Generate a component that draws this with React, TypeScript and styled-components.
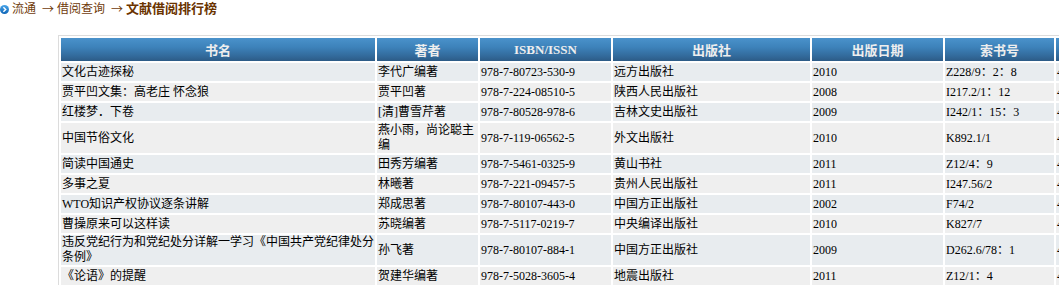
import React from "react";
import styled, { createGlobalStyle } from "styled-components";

const GlobalStyle = createGlobalStyle`
  html, body {
    margin: 0;
    padding: 0;
    background: #ffffff;
    overflow: hidden;
  }
  body {
    font-family: "Liberation Serif", "Noto Sans CJK SC", serif;
    font-size: 12px;
    color: #000;
  }
`;

const Page = styled.div`
  width: 1200px;
`;

const Crumbs = styled.div`
  display: flex;
  align-items: center;
  height: 18px;
  color: #703b0b;
  font-family: "Liberation Sans", "Noto Sans CJK SC", sans-serif;
  font-size: 12px;
  line-height: 18px;
`;

const CrumbIcon = styled.svg`
  width: 9px;
  height: 9px;
  margin: 0 3px 0 0;
  flex: none;
`;

const CrumbLink = styled.span`
  color: #703b0b;
`;

const CrumbArrow = styled.span`
  margin: 0 3px 0 6px;
  font-family: "Noto Sans CJK SC", sans-serif;
  color: #703b0b;
`;

const CrumbCurrent = styled.span`
  font-weight: bold;
  font-size: 13px;
  color: #6a3300;
`;

const TableWrap = styled.div`
  padding: 17px 0 0 58px;
`;

const Table = styled.table`
  border: 1px solid #dcdcdc;
  border-spacing: 2px;
  table-layout: fixed;
  width: 1081px;
`;

const HeadCell = styled.th<{ $w: number }>`
  width: ${(p) => p.$w}px;
  height: 23px;
  padding: 0;
  text-align: center;
  vertical-align: middle;
  font-size: 13px;
  font-weight: bold;
  color: #eeeeee;
  background: linear-gradient(
    to bottom,
    #4a92cb 0%,
    #3d82ba 40%,
    #32699a 80%,
    #2c5b86 100%
  );
`;

const Row = styled.tr<{ $alt: boolean }>`
  background: ${(p) => (p.$alt ? "#efefef" : "#e8ecef")};
`;

const Cell = styled.td`
  height: 18px;
  padding: 0 0 0 1px;
  line-height: 15px;
  vertical-align: middle;
  text-align: left;
  font-size: 12px;
  color: #000;
  word-break: break-all;
  overflow: hidden;
`;

const columns = [
  { title: "书名", w: 314 },
  { title: "著者", w: 101 },
  { title: "ISBN/ISSN", w: 131 },
  { title: "出版社", w: 197 },
  { title: "出版日期", w: 131 },
  { title: "索书号", w: 109 },
  { title: "借阅次数", w: 80 },
];

const books = [
  ["文化古迹探秘", "李代广编著", "978-7-80723-530-9", "远方出版社", "2010", "Z228/9：2：8", "45"],
  ["贾平凹文集：高老庄 怀念狼", "贾平凹著", "978-7-224-08510-5", "陕西人民出版社", "2008", "I217.2/1：12", "44"],
  ["红楼梦．下卷", "[清]曹雪芹著", "978-7-80528-978-6", "吉林文史出版社", "2009", "I242/1：15：3", "42"],
  ["中国节俗文化", "燕小雨，尚论聪主编", "978-7-119-06562-5", "外文出版社", "2010", "K892.1/1", "41"],
  ["简读中国通史", "田秀芳编著", "978-7-5461-0325-9", "黄山书社", "2011", "Z12/4：9", "41"],
  ["多事之夏", "林曦著", "978-7-221-09457-5", "贵州人民出版社", "2011", "I247.56/2", "40"],
  ["WTO知识产权协议逐条讲解", "郑成思著", "978-7-80107-443-0", "中国方正出版社", "2002", "F74/2", "40"],
  ["曹操原来可以这样读", "苏晓编著", "978-7-5117-0219-7", "中央编译出版社", "2010", "K827/7", "40"],
  ["违反党纪行为和党纪处分详解一学习《中国共产党纪律处分条例》", "孙飞著", "978-7-80107-884-1", "中国方正出版社", "2009", "D262.6/78：1", "40"],
  ["《论语》的提醒", "贺建华编著", "978-7-5028-3605-4", "地震出版社", "2011", "Z12/1：4", "40"],
];

const App = () => {
  return (
    <Page>
      <GlobalStyle />
      <Crumbs>
        <CrumbIcon viewBox="0 0 9 9">
          <defs>
            <linearGradient id="dot" x1="0" y1="0" x2="0" y2="1">
              <stop offset="0" stopColor="#4aa6ea" />
              <stop offset="1" stopColor="#0d63b5" />
            </linearGradient>
          </defs>
          <circle cx="4.5" cy="4.5" r="4.5" fill="url(#dot)" />
          <path d="M3.4 2.3 L5.7 4.5 L3.4 6.7" stroke="#fff" strokeWidth="1.4" fill="none" />
        </CrumbIcon>
        <CrumbLink>流通</CrumbLink>
        <CrumbArrow>→</CrumbArrow>
        <CrumbLink>借阅查询</CrumbLink>
        <CrumbArrow>→</CrumbArrow>
        <CrumbCurrent>文献借阅排行榜</CrumbCurrent>
      </Crumbs>
      <TableWrap>
        <Table>
          <thead>
            <tr>
              {columns.map((c) => (
                <HeadCell key={c.title} $w={c.w}>
                  {c.title}
                </HeadCell>
              ))}
            </tr>
          </thead>
          <tbody>
            {books.map((b, i) => (
              <Row key={b[2]} $alt={i % 2 === 1}>
                {b.map((v, j) => (
                  <Cell key={j}>{v}</Cell>
                ))}
              </Row>
            ))}
          </tbody>
        </Table>
      </TableWrap>
    </Page>
  );
};

export default App;
